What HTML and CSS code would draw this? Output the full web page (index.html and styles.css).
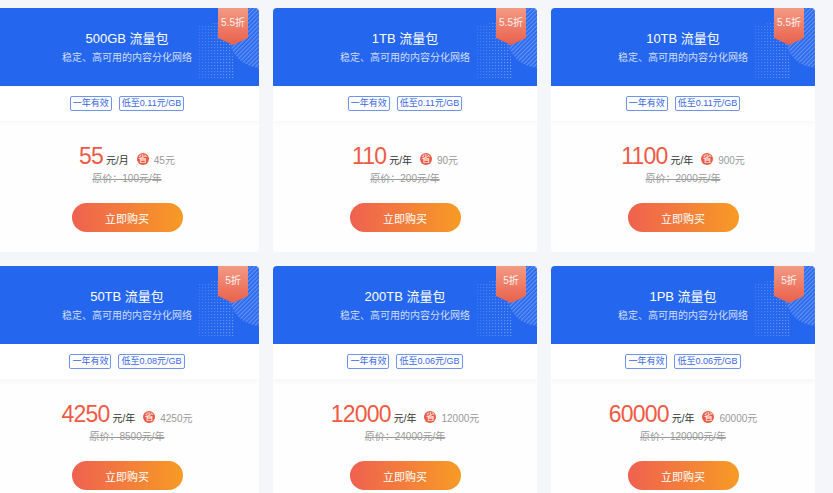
FILE: index.html
```html
<!DOCTYPE html>
<html lang="zh-CN">
<head>
<meta charset="utf-8">
<title>流量包</title>
<link rel="stylesheet" href="styles.css">
</head>
<body>
<svg width="0" height="0" class="defs">
  <defs>
    <pattern id="dots" width="3" height="3" patternUnits="userSpaceOnUse">
      <rect x="0" y="0" width="1.2" height="1.2" fill="#ffffff"/>
    </pattern>
    <pattern id="hatch" width="3" height="3" patternUnits="userSpaceOnUse" patternTransform="rotate(45)">
      <rect x="0" y="0" width="1.3" height="3" fill="#ffffff"/>
    </pattern>
    <linearGradient id="fade" x1="0" y1="0" x2="1" y2="0">
      <stop offset="0" stop-color="#fff" stop-opacity="0.15"/>
      <stop offset="1" stop-color="#fff" stop-opacity="0.5"/>
    </linearGradient>
    <mask id="dotmask">
      <rect x="0" y="0" width="60" height="78" fill="url(#fade)"/>
    </mask>
  </defs>
</svg>
<div class="grid">
  <div class="card">
    <div class="head">
      <svg class="deco" viewBox="0 0 60 78" width="60" height="78">
        <g mask="url(#dotmask)"><polygon points="0,18 30,12 36,70 0,70" fill="url(#dots)"/></g>
        <circle cx="62" cy="28" r="32" fill="url(#hatch)" opacity="0.3"/>
      </svg>
      <div class="ribbon">5.5折</div>
      <div class="title">500GB 流量包</div>
      <div class="sub">稳定、高可用的内容分化网络</div>
    </div>
    <div class="tags"><span class="tag">一年有效</span><span class="tag">低至0.11元/GB</span></div>
    <div class="body">
      <div class="price"><span class="num">55</span><span class="unit">元/月</span><span class="save">省</span><span class="saved">45元</span></div>
      <div class="orig">原价：100元/年</div>
      <button class="buy">立即购买</button>
    </div>
  </div>
  <div class="card">
    <div class="head">
      <svg class="deco" viewBox="0 0 60 78" width="60" height="78">
        <g mask="url(#dotmask)"><polygon points="0,18 30,12 36,70 0,70" fill="url(#dots)"/></g>
        <circle cx="62" cy="28" r="32" fill="url(#hatch)" opacity="0.3"/>
      </svg>
      <div class="ribbon">5.5折</div>
      <div class="title">1TB 流量包</div>
      <div class="sub">稳定、高可用的内容分化网络</div>
    </div>
    <div class="tags"><span class="tag">一年有效</span><span class="tag">低至0.11元/GB</span></div>
    <div class="body">
      <div class="price"><span class="num">110</span><span class="unit">元/年</span><span class="save">省</span><span class="saved">90元</span></div>
      <div class="orig">原价：200元/年</div>
      <button class="buy">立即购买</button>
    </div>
  </div>
  <div class="card">
    <div class="head">
      <svg class="deco" viewBox="0 0 60 78" width="60" height="78">
        <g mask="url(#dotmask)"><polygon points="0,18 30,12 36,70 0,70" fill="url(#dots)"/></g>
        <circle cx="62" cy="28" r="32" fill="url(#hatch)" opacity="0.3"/>
      </svg>
      <div class="ribbon">5.5折</div>
      <div class="title">10TB 流量包</div>
      <div class="sub">稳定、高可用的内容分化网络</div>
    </div>
    <div class="tags"><span class="tag">一年有效</span><span class="tag">低至0.11元/GB</span></div>
    <div class="body">
      <div class="price"><span class="num">1100</span><span class="unit">元/年</span><span class="save">省</span><span class="saved">900元</span></div>
      <div class="orig">原价：2000元/年</div>
      <button class="buy">立即购买</button>
    </div>
  </div>
  <div class="card">
    <div class="head">
      <svg class="deco" viewBox="0 0 60 78" width="60" height="78">
        <g mask="url(#dotmask)"><polygon points="0,18 30,12 36,70 0,70" fill="url(#dots)"/></g>
        <circle cx="62" cy="28" r="32" fill="url(#hatch)" opacity="0.3"/>
      </svg>
      <div class="ribbon">5折</div>
      <div class="title">50TB 流量包</div>
      <div class="sub">稳定、高可用的内容分化网络</div>
    </div>
    <div class="tags"><span class="tag">一年有效</span><span class="tag">低至0.08元/GB</span></div>
    <div class="body">
      <div class="price"><span class="num">4250</span><span class="unit">元/年</span><span class="save">省</span><span class="saved">4250元</span></div>
      <div class="orig">原价：8500元/年</div>
      <button class="buy">立即购买</button>
    </div>
  </div>
  <div class="card">
    <div class="head">
      <svg class="deco" viewBox="0 0 60 78" width="60" height="78">
        <g mask="url(#dotmask)"><polygon points="0,18 30,12 36,70 0,70" fill="url(#dots)"/></g>
        <circle cx="62" cy="28" r="32" fill="url(#hatch)" opacity="0.3"/>
      </svg>
      <div class="ribbon">5折</div>
      <div class="title">200TB 流量包</div>
      <div class="sub">稳定、高可用的内容分化网络</div>
    </div>
    <div class="tags"><span class="tag">一年有效</span><span class="tag">低至0.06元/GB</span></div>
    <div class="body">
      <div class="price"><span class="num">12000</span><span class="unit">元/年</span><span class="save">省</span><span class="saved">12000元</span></div>
      <div class="orig">原价：24000元/年</div>
      <button class="buy">立即购买</button>
    </div>
  </div>
  <div class="card">
    <div class="head">
      <svg class="deco" viewBox="0 0 60 78" width="60" height="78">
        <g mask="url(#dotmask)"><polygon points="0,18 30,12 36,70 0,70" fill="url(#dots)"/></g>
        <circle cx="62" cy="28" r="32" fill="url(#hatch)" opacity="0.3"/>
      </svg>
      <div class="ribbon">5折</div>
      <div class="title">1PB 流量包</div>
      <div class="sub">稳定、高可用的内容分化网络</div>
    </div>
    <div class="tags"><span class="tag">一年有效</span><span class="tag">低至0.06元/GB</span></div>
    <div class="body">
      <div class="price"><span class="num">60000</span><span class="unit">元/年</span><span class="save">省</span><span class="saved">60000元</span></div>
      <div class="orig">原价：120000元/年</div>
      <button class="buy">立即购买</button>
    </div>
  </div>
</div>
</body>
</html>
```

FILE: styles.css
```css
* { box-sizing: border-box; }
html, body {
  margin: 0;
  padding: 0;
  background: #f5f6fa;
  font-family: "Liberation Sans", "Noto Sans CJK SC", sans-serif;
  overflow: hidden;
}
.defs { position: absolute; width: 0; height: 0; }
.grid {
  display: grid;
  grid-template-columns: repeat(3, 264px);
  column-gap: 14px;
  row-gap: 14px;
  padding-top: 8px;
  margin-left: -5px;
}
.card {
  background: #ffffff;
  border-radius: 4px;
  overflow: hidden;
  display: flex;
  flex-direction: column;
}
.head {
  position: relative;
  height: 78px;
  background: #2466ee;
  color: #ffffff;
  display: flex;
  flex-direction: column;
  align-items: center;
  padding-top: 22px;
}
.deco {
  position: absolute;
  right: 0;
  top: 0;
}
.ribbon {
  position: absolute;
  top: 0;
  right: 11px;
  width: 30px;
  height: 37px;
  background: linear-gradient(180deg, #f39a84 0%, #e9604b 100%);
  clip-path: polygon(0 0, 100% 0, 100% 81%, 50% 100%, 0 81%);
  font-size: 10px;
  line-height: 28px;
  text-align: center;
  color: #fff3ee;
  padding-top: 1px;
}
.title {
  position: relative;
  font-size: 13px;
  line-height: 18px;
}
.sub {
  position: relative;
  font-size: 10px;
  line-height: 14px;
  margin-top: 3px;
  color: #d2defb;
}
.tags {
  height: 35px;
  display: flex;
  justify-content: center;
  align-items: center;
  gap: 7px;
  box-shadow: 0 2px 4px rgba(30, 40, 80, 0.04);
  position: relative;
}
.tag {
  font-size: 9px;
  line-height: 13px;
  padding: 0 2px;
  color: #3566e6;
  border: 1px solid #6f93ef;
  border-radius: 2px;
}
.body {
  display: flex;
  flex-direction: column;
  align-items: center;
  padding-top: 22px;
  padding-bottom: 20px;
  background: #fefeff;
}
.price {
  display: flex;
  align-items: baseline;
  height: 26px;
}
.num {
  font-family: "Liberation Sans", sans-serif;
  font-size: 23px;
  letter-spacing: -0.8px;
  line-height: 26px;
  color: #ef5a44;
}
.unit {
  font-size: 10px;
  color: #333333;
  margin-left: 3px;
}
.save {
  align-self: center;
  margin-left: 8px;
  margin-top: 6px;
  width: 12px;
  height: 12px;
  border-radius: 50%;
  background: #ec5a43;
  color: #ffffff;
  font-size: 9px;
  line-height: 12px;
  text-align: center;
}
.saved {
  font-size: 10px;
  color: #999999;
  margin-left: 5px;
}
.orig {
  font-size: 10px;
  line-height: 14px;
  color: #999999;
  text-decoration: line-through;
  margin-top: 3px;
}
.buy {
  margin-top: 17px;
  width: 111px;
  height: 29px;
  border: none;
  border-radius: 15px;
  background: linear-gradient(90deg, #ef6150 0%, #f79b25 100%);
  color: #ffffff;
  font-family: "Liberation Sans", "Noto Sans CJK SC", sans-serif;
  font-size: 11px;
  padding: 0;
}
```
